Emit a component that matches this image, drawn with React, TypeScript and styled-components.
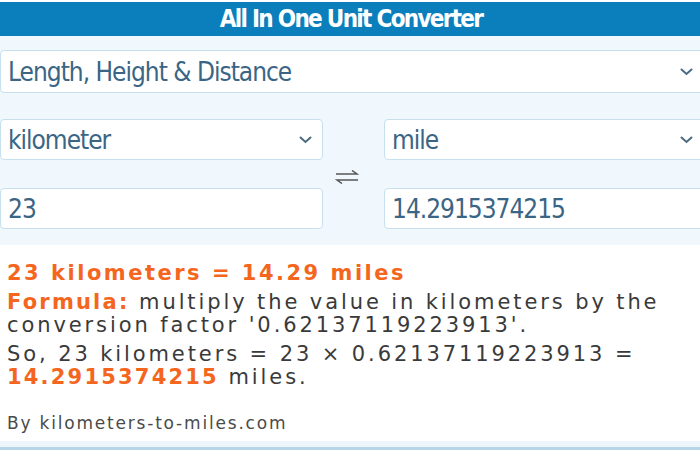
import React from 'react';
import styled, { createGlobalStyle } from 'styled-components';

const GlobalStyle = createGlobalStyle`
  html, body {
    margin: 0;
    padding: 0;
    background: #ffffff;
    overflow: hidden;
  }
`;

const Page = styled.div`
  width: 704px;
  height: 450px;
  display: flex;
  flex-direction: column;
  background: #ffffff;
`;

const Header = styled.div`
  margin-top: 2px;
  height: 34px;
  background: #0b7fbc;
  color: #ffffff;
  display: flex;
  align-items: center;
  justify-content: center;
  padding-right: 2px;
  font-family: "DejaVu Sans Condensed", "Liberation Sans", sans-serif;
  font-weight: 700;
  font-size: 24px;
  letter-spacing: -1.7px;
`;

const Panel = styled.div`
  background: #f0f8fd;
  padding: 14px 0 16px;
  display: flex;
  flex-direction: column;
  gap: 26px;
`;

const Field = styled.div<{ $height?: number }>`
  height: ${p => p.$height ?? 41}px;
  box-sizing: border-box;
  background: #ffffff;
  border: 1px solid #c6e0ee;
  border-radius: 4px;
  display: flex;
  align-items: center;
  justify-content: space-between;
  padding: 0 10px 0 7px;
  color: #3b6584;
  font-family: "DejaVu Sans Condensed", "Liberation Sans", sans-serif;
  font-size: 26px;
  letter-spacing: -1px;
`;

const Grid = styled.div`
  display: grid;
  grid-template-columns: 323px 61px 1fr;
  grid-template-rows: 41px 41px;
  row-gap: 28px;
`;

const Swap = styled.div`
  grid-column: 2;
  grid-row: 1 / span 2;
  display: flex;
  align-items: center;
  justify-content: center;
  padding: 6px 14px 0 0;
`;

const Result = styled.div`
  flex: 1;
  padding: 16px 7px 0;
  font-family: "DejaVu Sans", "Liberation Sans", sans-serif;
  color: #3a3a3a;
  display: flex;
  flex-direction: column;
`;

const Headline = styled.div`
  color: #f4661e;
  font-weight: 700;
  font-size: 21px;
  letter-spacing: 2.5px;
  line-height: 24px;
`;

const Para = styled.p`
  margin: 6px 0 0;
  font-size: 21px;
  line-height: 23px;
  letter-spacing: 2.9px;
`;

const Hot = styled.span`
  color: #f4661e;
  font-weight: 700;
  letter-spacing: 2.2px;
`;

const Credit = styled.div`
  margin-top: auto;
  margin-bottom: 8px;
  font-size: 17px;
  letter-spacing: 1.8px;
  color: #4a4a4a;
`;

const Footer = styled.div`
  height: 6px;
  background: #eef6fc;
  border-bottom: 3px solid #b8d6ea;
`;

const Chevron = () => (
  <svg width="13" height="8" viewBox="0 0 13 8">
    <path d="M1.5 1.5 L6.5 6 L11.5 1.5" fill="none" stroke="#4a6a80" strokeWidth="2" strokeLinecap="round" />
  </svg>
);

const SwapIcon = () => (
  <svg width="24" height="14" viewBox="0 0 24 14">
    <path d="M1 4 H22 L17 0.5" fill="none" stroke="#555" strokeWidth="1.5" />
    <path d="M23 10 H2 L7 13.5" fill="none" stroke="#555" strokeWidth="1.5" />
  </svg>
);

const App: React.FC = () => {
  return (
    <>
      <GlobalStyle />
      <Page>
        <Header>All In One Unit Converter</Header>
        <Panel>
          <Field $height={43}>
            <span>Length, Height &amp; Distance</span>
            <Chevron />
          </Field>
          <Grid>
            <Field>
              <span>kilometer</span>
              <Chevron />
            </Field>
            <Swap><SwapIcon /></Swap>
            <Field>
              <span>mile</span>
              <Chevron />
            </Field>
            <Field>23</Field>
            <Field>14.2915374215</Field>
          </Grid>
        </Panel>
        <Result>
          <Headline>23 kilometers = 14.29 miles</Headline>
          <Para>
            <Hot>Formula:</Hot> multiply the value in kilometers by the conversion factor '0.62137119223913'.
          </Para>
          <Para>
            So, 23 kilometers = 23 × 0.62137119223913 = <Hot>14.2915374215</Hot> miles.
          </Para>
          <Credit>By kilometers-to-miles.com</Credit>
        </Result>
        <Footer />
      </Page>
    </>
  );
};

export default App;
